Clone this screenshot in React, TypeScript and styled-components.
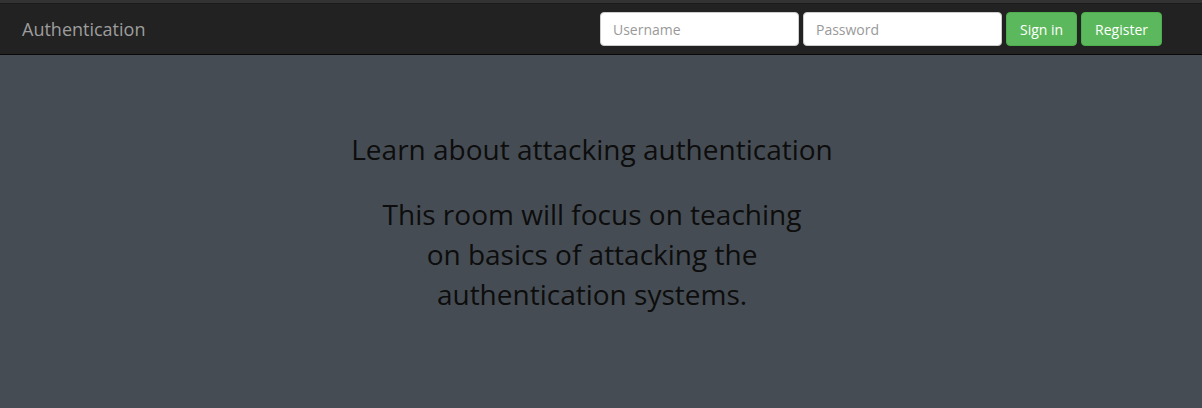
import React from "react";
import styled, { createGlobalStyle } from "styled-components";

const Global = createGlobalStyle`
  html, body { margin: 0; padding: 0; height: 100%; }
  body {
    background: #454c53;
    font-family: "Open Sans", "Noto Sans", sans-serif;
    color: #0d0d0d;
  }
  #root { min-height: 100%; }
`;

const TopStrip = styled.div`
  height: 3px;
  background: #333;
  border-bottom: 1px solid #1a1a1a;
`;

const Navbar = styled.nav`
  height: 50px;
  background: #222;
  border-bottom: 1px solid #080808;
  display: flex;
  align-items: center;
  justify-content: space-between;
  padding: 0 40px 0 22px;
`;

const Brand = styled.a`
  font-size: 18px;
  color: #9d9d9d;
  text-decoration: none;
  line-height: 20px;
`;

const Form = styled.form`
  display: flex;
  align-items: center;
  gap: 4px;
`;

const Input = styled.input`
  box-sizing: border-box;
  width: 199px;
  height: 34px;
  border: 1px solid #ccc;
  border-radius: 4px;
  padding: 6px 12px;
  font-family: inherit;
  font-size: 14px;
  color: #555;
  background: #fff;
  &::placeholder { color: #999; }
`;

const Button = styled.button`
  box-sizing: border-box;
  height: 34px;
  padding: 6px 13px;
  border: 1px solid #4cae4c;
  border-radius: 4px;
  background: #5cb85c;
  color: #fff;
  font-family: inherit;
  font-size: 14px;
  cursor: pointer;
`;

const Main = styled.main`
  display: flex;
  flex-direction: column;
  align-items: center;
  padding: 74px 18px 0 0;
  text-align: center;
`;

const Heading = styled.h2`
  margin: 0 0 25px;
  font-size: 28px;
  font-weight: 400;
  line-height: 40px;
`;

const Lead = styled.p`
  margin: 0;
  max-width: 430px;
  font-size: 28px;
  line-height: 40px;
`;

export default function App() {
  return (
    <>
      <Global />
      <TopStrip />
      <Navbar>
        <Brand href="#">Authentication</Brand>
        <Form onSubmit={(e) => e.preventDefault()}>
          <Input type="text" placeholder="Username" />
          <Input type="password" placeholder="Password" />
          <Button type="submit">Sign in</Button>
          <Button type="button">Register</Button>
        </Form>
      </Navbar>
      <Main>
        <Heading>Learn about attacking authentication</Heading>
        <Lead>This room will focus on teaching on basics of attacking the authentication systems.</Lead>
      </Main>
    </>
  );
}
